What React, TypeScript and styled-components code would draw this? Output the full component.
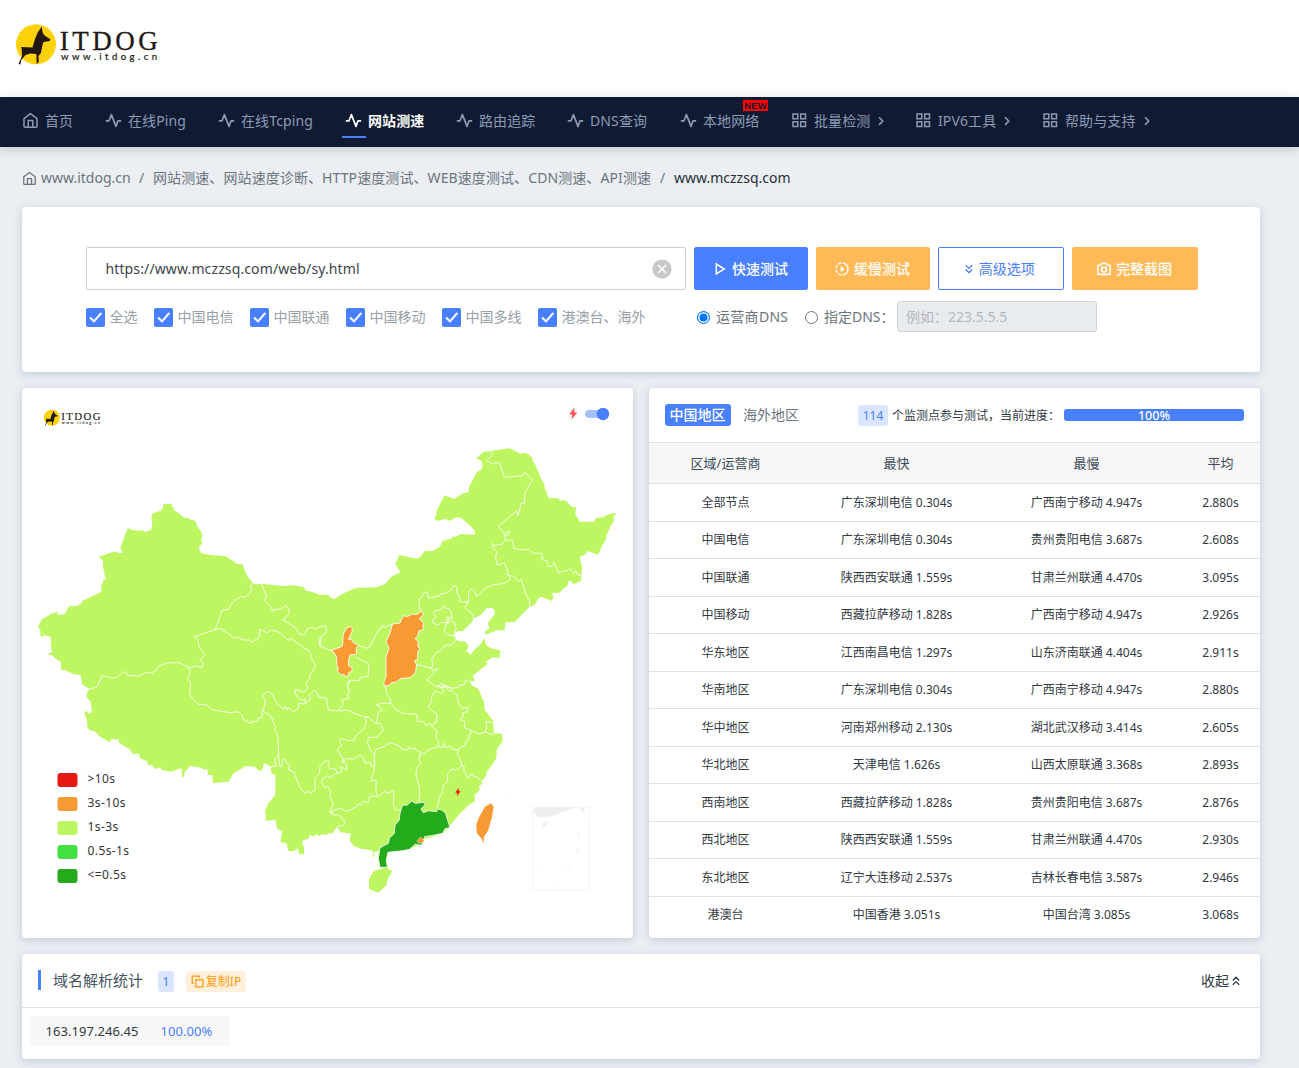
import React from 'react';
import styled, { createGlobalStyle, css } from 'styled-components';
import { MdSlowMotionVideo } from 'react-icons/md';

const blue = '#4880ff';
const orange = '#ffba57';
const lime = '#bdf661';
const mapOrange = '#f89a34';

const GlobalStyle = createGlobalStyle`
  * { box-sizing: border-box; }
  body {
    margin: 0;
    background: #ebeef3;
    color: #32393f;
    font-family: "Noto Sans", "Noto Sans CJK SC", sans-serif;
    font-size: 14px;
    line-height: 20px;
    overflow: hidden;
  }
`;

const Page = styled.div`
  width: 1299px;
  height: 1068px;
  overflow: hidden;
`;

const Header = styled.header`
  height: 97px;
  padding: 20px 0 0 14px;
  background: #fff;
`;

const Nav = styled.nav`
  display: flex;
  height: 50px;
  padding-left: 22px;
  background: #101a33;
  box-shadow: 0 2px 10px rgba(50, 60, 80, 0.22);
`;

const NavItem = styled.a<{ $w: number; $active?: boolean }>`
  display: flex;
  position: relative;
  align-items: center;
  width: ${(p) => p.$w}px;
  height: 48px;
  white-space: nowrap;
  color: ${(p) => (p.$active ? '#fff' : '#8c9ab5')};
  font-weight: ${(p) => (p.$active ? 700 : 400)};
  letter-spacing: 0.12px;
  > svg:first-child {
    width: 17px;
    height: 17px;
    margin-right: 6px;
    margin-top: -1px;
    flex: none;
  }
  ${(p) =>
    p.$active &&
    css`
      &::after {
        content: '';
        position: absolute;
        left: -3px;
        top: 39px;
        width: 24px;
        height: 2px;
        background: ${blue};
      }
    `}
`;

const NewTag = styled.span`
  position: absolute;
  left: 63px;
  top: 3px;
  width: 25px;
  height: 11px;
  background: #f00;
  color: #101a33;
  font: 700 9.5px/11px "Liberation Sans", sans-serif;
  text-align: center;
`;

const Crumbs = styled.div`
  display: flex;
  align-items: center;
  height: 60px;
  padding: 2px 0 0 22px;
  color: #6c757d;
  white-space: nowrap;
  svg {
    width: 15px;
    height: 15px;
    margin-right: 4px;
  }
`;

const CrumbText = styled.span<{ $w: number; $dark?: boolean; $spacing?: number }>`
  width: ${(p) => p.$w}px;
  color: ${(p) => (p.$dark ? '#272e37' : 'inherit')};
  letter-spacing: ${(p) => p.$spacing ?? 0}px;
`;

const Main = styled.main`
  display: flex;
  flex-direction: column;
  gap: 16px;
  width: 1238px;
  margin-left: 22px;
`;

const Card = styled.section<{ $h: number }>`
  height: ${(p) => p.$h}px;
  background: #fff;
  border-radius: 4px;
  box-shadow: 0 2px 9px rgba(80, 100, 130, 0.26);
  overflow: hidden;
`;

const FormCard = styled(Card)`
  padding: 40px 62px 0 64px;
`;

const FormRow = styled.div`
  display: flex;
  gap: 8px;
`;

const UrlField = styled.div`
  display: flex;
  align-items: center;
  justify-content: space-between;
  width: 600px;
  height: 43px;
  padding: 0 13px 0 18.5px;
  border: 1px solid #ccd0d6;
  border-radius: 2px;
  color: #3d444c;
  letter-spacing: 0.12px;
`;

const Button = styled.button<{ $w: number; $kind: 'blue' | 'orange' | 'outline' }>`
  display: flex;
  align-items: center;
  justify-content: center;
  gap: 4px;
  width: ${(p) => p.$w}px;
  height: 43px;
  padding: 0 2px 0 0;
  border: 1px solid ${(p) => (p.$kind === 'orange' ? orange : blue)};
  border-radius: 2px;
  background: ${(p) => (p.$kind === 'outline' ? '#fff' : p.$kind === 'blue' ? blue : orange)};
  color: ${(p) => (p.$kind === 'outline' ? blue : '#fff')};
  font: inherit;
  font-weight: ${(p) => (p.$kind === 'outline' ? 400 : 500)};
`;

const OptionRow = styled.div`
  display: flex;
  align-items: center;
  height: 32px;
  margin-top: 11px;
  white-space: nowrap;
`;

const Check = styled.label<{ $w: number }>`
  display: flex;
  align-items: center;
  width: ${(p) => p.$w}px;
  color: #98a0a8;
  svg {
    width: 19px;
    height: 19px;
    margin-right: 4.5px;
    flex: none;
  }
`;

const RadioLabel = styled.label<{ $w: number; $spacing: number }>`
  display: flex;
  align-items: center;
  width: ${(p) => p.$w}px;
  color: #6c757d;
  letter-spacing: ${(p) => p.$spacing}px;
`;

const Radio = styled.span<{ $on?: boolean }>`
  width: 13px;
  height: 13px;
  margin-right: 6px;
  border: 1px solid ${(p) => (p.$on ? '#0075ff' : '#767676')};
  border-radius: 50%;
  background: ${(p) => (p.$on ? '#0075ff' : '#fff')};
  box-shadow: inset 0 0 0 1.5px #fff;
`;

const DnsField = styled.div`
  width: 200px;
  height: 31px;
  margin-bottom: 2px;
  padding: 5px 8px;
  border: 1px solid #ced4da;
  border-radius: 3px;
  background: #e9ecef;
  color: #b2b8be;
`;

const Columns = styled.div`
  display: grid;
  grid-template-columns: 611px 611px;
  gap: 16px;
`;

const MapSvg = styled.svg`
  display: block;
  width: 611px;
  height: 550px;
`;

const RegionHead = styled.div`
  display: flex;
  align-items: center;
  height: 54px;
  padding: 0 16px;
  font-size: 12px;
  white-space: nowrap;
`;

const Tab = styled.span<{ $on?: boolean }>`
  width: ${(p) => (p.$on ? 66 : 127)}px;
  height: 22px;
  padding-left: ${(p) => (p.$on ? 4.5 : 12)}px;
  border-radius: 3px;
  background: ${(p) => (p.$on ? blue : 'transparent')};
  color: ${(p) => (p.$on ? '#fff' : '#6c757d')};
  font-size: 14px;
  font-weight: ${(p) => (p.$on ? 500 : 400)};
  line-height: 21px;
`;

const Badge = styled.span<{ $w: number; $warm?: boolean }>`
  display: flex;
  align-items: center;
  justify-content: center;
  gap: 2px;
  width: ${(p) => p.$w}px;
  height: 21px;
  padding-top: 1px;
  border-radius: 3px;
  background: ${(p) => (p.$warm ? '#fff0dc' : '#dae6ff')};
  color: ${(p) => (p.$warm ? '#ff9b0d' : blue)};
  font-size: 12px;
  white-space: nowrap;
`;

const ProgressLabel = styled.span`
  width: 172px;
  margin-left: 4px;
  padding-top: 1px;
`;

const Progress = styled.div`
  width: 180px;
  height: 12px;
  border-radius: 3px;
  background: ${blue};
  color: #fff;
  font-size: 12.5px;
  font-weight: 500;
  line-height: 13px;
  text-align: center;
`;

const Row = styled.div<{ $head?: boolean }>`
  display: grid;
  grid-template-columns: 153px 189px 191px 77px;
  align-items: center;
  height: ${(p) => (p.$head ? 41 : 37.5)}px;
  padding-top: ${(p) => (p.$head ? 0 : 1)}px;
  border-top: 1px solid #dee2e6;
  background: ${(p) => (p.$head ? '#f7f7f7' : '#fff')};
  color: ${(p) => (p.$head ? '#3b4a58' : '#32393f')};
  font-size: ${(p) => (p.$head ? 13 : 12)}px;
  text-align: center;
`;

const StatsHead = styled.div`
  display: flex;
  align-items: center;
  height: 54px;
  padding: 1px 20px 0 16px;
  border-bottom: 1px solid #dee2e6;
`;

const Title = styled.h2`
  display: flex;
  align-items: center;
  width: 120px;
  height: 20px;
  margin: -2px 0 0;
  padding-left: 12px;
  border-left: 3px solid ${blue};
  color: #475560;
  font-size: 15px;
  font-weight: 400;
`;

const Spacer = styled.span<{ $w?: number }>`
  ${(p) => (p.$w ? `width: ${p.$w}px;` : 'flex: 1;')}
`;

const Collapse = styled.span`
  display: flex;
  align-items: center;
  gap: 3px;
`;

const IpRow = styled.div`
  display: flex;
  align-items: center;
  width: 200px;
  height: 30px;
  margin: 8px;
  padding-left: 15.5px;
  border-radius: 3px;
  background: #f7f7f7;
  font-size: 13px;
  letter-spacing: 0.05px;
`;

const IpRate = styled.span`
  margin-left: 22px;
  color: ${blue};
`;

const iconStroke = {
  fill: 'none',
  stroke: 'currentColor',
  strokeWidth: 1.5,
  strokeLinejoin: 'round' as const,
};

const HomeIcon = () => (
  <svg viewBox="0 0 17 17" {...iconStroke}>
    <path d="M2 6.6 L8.5 1.6 L15 6.6 V14.2 Q15 15.2 14 15.2 H3 Q2 15.2 2 14.2Z M6.2 15 V8.6 H10.8 V15" />
  </svg>
);

const PulseIcon = () => (
  <svg viewBox="0 0 17 17" {...iconStroke} strokeWidth={1.7}>
    <path d="M.8 8.8 H4 L6.4 2.6 L11 14.4 L13 8.8 H16.2" />
  </svg>
);

const GridIcon = () => (
  <svg viewBox="0 0 17 17" {...iconStroke} strokeLinejoin="miter">
    <path d="M2 2H6.8V6.8H2Z M9.7 2H14.5V6.8H9.7Z M2 9.7H6.8V14.5H2Z M9.7 9.7H14.5V14.5H9.7Z" />
  </svg>
);

const ArrowSvg = styled.svg`
  width: 6px;
  height: 10px;
  margin-left: 8px;
`;

const Arrow = () => (
  <ArrowSvg viewBox="0 0 6 10" {...iconStroke}>
    <path d="M1 1.3 L4.8 5.1 L1 8.9" />
  </ArrowSvg>
);

const PlayIcon = () => (
  <svg width="16" height="16" viewBox="0 0 16 16" {...iconStroke} strokeLinejoin="miter">
    <path d="M4.3 3 L12.3 8 L4.3 13 Z" />
  </svg>
);

const CameraIcon = () => (
  <svg width="16" height="16" viewBox="0 0 16 16" {...iconStroke} strokeWidth={1.6}>
    <path d="M1.8 4.3 H4.6 L6 2.4 H10 L11.4 4.3 H14.2 V13.4 H1.8Z" />
    <circle cx="8" cy="8.6" r="2.5" />
  </svg>
);

const DoubleChevron = ({ up }: { up?: boolean }) => (
  <svg width="8" height="10" viewBox="0 0 8 10" {...iconStroke} strokeWidth={1.3}>
    <path d={up ? 'M.8 4.5 L4 1.3 L7.2 4.5 M.8 8.8 L4 5.6 L7.2 8.8' : 'M.8 1.2 L4 4.4 L7.2 1.2 M.8 5.5 L4 8.7 L7.2 5.5'} />
  </svg>
);

const CopyIcon = () => (
  <svg width="13" height="13" viewBox="0 0 13 13" {...iconStroke} strokeWidth={1.3}>
    <path d="M4.8 4.6 H12 V11.8 H4.8Z M2.8 8.2 H1.2 V1.2 H8.2 V2.8" />
  </svg>
);

/* Brand mark: yellow disc, sitting dog and two-line wordmark */
const Logo = ({ x, y, width, height }: { x?: number; y?: number; width: number; height: number }) => (
  <svg x={x} y={y} width={width} height={height} viewBox="0 0 150 50">
    <circle cx="22" cy="24.3" r="20" fill="#fdd209" />
    <path
      d="M27.7 6.5 L28.5 12 L30 15 L36.5 19.5 L35.7 21 L29.5 22 L28.5 25 L27 33 L24.5 36 L24.8 42 L22.6 44 L22.4 34 L16.5 33.5 L11.5 35 L7.3 40 L6.4 44.5 L4.5 44 L8 36 L7.6 28.5 L7 27 L18.5 27.5 L21 19 L23.5 13 Z"
      fill="#231815"
    />
    <text x="45.8" y="29.9" fontSize="27" fontFamily="Liberation Serif, serif" textLength="98" fill="#231815" stroke="#231815" strokeWidth=".3">
      ITDOG
    </text>
    <text x="47" y="40" fontSize="9.6" fontFamily="Lato, sans-serif" textLength="96" fill="#231815" stroke="#231815" strokeWidth=".2">
      www.itdog.cn
    </text>
  </svg>
);

const CheckIcon = () => (
  <svg viewBox="0 0 19 19">
    <rect width="19" height="19" rx="2" fill={blue} />
    <path d="M4 9.5 L8 13.3 L15.3 5" fill="none" stroke="#fff" strokeWidth="2" />
  </svg>
);

const ClearIcon = () => (
  <svg width="20" height="20" viewBox="0 0 20 20">
    <circle cx="10" cy="10" r="9.6" fill="#c8c8c8" />
    <path d="M6 6 L14 14 M14 6 L6 14" stroke="#fff" strokeWidth="1.6" />
  </svg>
);

const mainland =
  'M48,710 60,687 84,675 88,668 97,671 103,663 109,675 128,672 141,649 165,648 178,640 180,633 236,607 239,600 236,585 244,578 243,571 251,566 243,530 242,511 230,500 280,484 288,489 303,489 295,473 317,414 333,421 364,422 370,426 385,421 391,411 388,378 393,370 415,363 424,354 423,343 451,341 448,348 456,353 455,361 470,369 486,383 500,384 506,389 515,390 522,395 527,412 537,424 541,434 541,442 537,449 541,458 532,471 532,480 537,489 558,494 612,499 646,522 662,523 665,534 678,562 693,579 700,583 718,581 782,588 820,586 845,592 852,602 870,605 894,615 919,614 924,622 937,627 964,610 1004,593 1064,592 1091,581 1106,562 1135,547 1120,521 1132,495 1183,506 1197,499 1207,484 1234,482 1252,472 1263,452 1287,446 1291,440 1302,440 1315,432 1359,434 1359,424 1349,412 1318,384 1300,382 1286,392 1269,387 1244,393 1236,382 1243,377 1244,361 1268,316 1297,327 1319,312 1341,305 1340,293 1364,247 1380,236 1382,224 1377,211 1362,206 1385,185 1402,184 1464,175 1497,192 1506,188 1519,192 1532,205 1531,211 1544,230 1543,235 1556,260 1557,268 1566,280 1569,300 1575,303 1574,313 1581,324 1609,325 1615,332 1628,330 1651,352 1662,352 1660,372 1673,395 1716,395 1722,384 1742,382 1765,371 1784,368 1775,379 1776,395 1768,403 1761,421 1753,434 1753,447 1740,467 1728,494 1698,483 1687,495 1673,500 1680,532 1677,572 1655,583 1660,590 1647,572 1639,573 1636,589 1625,595 1613,608 1589,609 1594,620 1591,633 1557,620 1549,626 1537,646 1523,650 1478,696 1450,697 1448,721 1424,721 1391,734 1388,726 1403,715 1397,700 1418,673 1418,661 1410,654 1394,654 1379,673 1354,686 1349,697 1322,724 1308,722 1294,736 1307,753 1331,755 1340,771 1332,783 1346,794 1359,777 1376,762 1388,745 1392,765 1404,774 1435,781 1432,804 1411,802 1392,815 1397,823 1378,836 1352,858 1360,872 1342,874 1349,885 1369,897 1386,937 1388,960 1414,993 1415,1030 1439,1031 1443,1053 1424,1078 1423,1103 1415,1118 1394,1145 1391,1160 1378,1174 1381,1180 1370,1190 1374,1200 1357,1215 1359,1234 1339,1246 1309,1276 1288,1302 1280,1313 1262,1330 1234,1340 1208,1347 1200,1365 1190,1365 1162,1378 1144,1382 1098,1387 1093,1410 1096,1432 1074,1432 1069,1406 1071,1383 1056,1385 1055,1402 1052,1402 1052,1382 1033,1378 1019,1377 994,1367 983,1350 987,1331 957,1327 945,1312 934,1325 931,1331 923,1329 910,1335 900,1333 892,1338 882,1333 876,1340 864,1334 858,1348 843,1350 841,1362 847,1372 846,1392 831,1392 829,1375 815,1383 799,1383 794,1360 775,1356 781,1323 766,1317 760,1290 729,1292 732,1280 729,1262 739,1240 760,1214 760,1156 748,1150 746,1130 726,1119 720,1143 707,1140 700,1131 672,1127 633,1151 620,1175 573,1179 571,1156 558,1154 556,1137 545,1139 538,1133 505,1128 488,1146 487,1162 481,1161 478,1134 447,1145 418,1139 416,1132 401,1138 390,1126 378,1125 375,1113 354,1105 351,1091 331,1091 325,1079 291,1058 290,1049 269,1047 264,1057 234,1040 220,1025 203,1020 196,1012 195,990 186,970 194,962 200,972 210,966 206,935 194,922 194,910 203,897 180,883 176,854 155,853 128,840 117,839 117,815 102,807 93,797 76,792 92,786 88,780 86,741 66,735 62,740 55,738 55,719Z';

const westBorders = [
  'M693,579 684,590 690,600 682,613 665,623 660,618 640,630 627,643 620,658 600,661 590,690 580,718 517,741 528,748 530,768 549,795 543,803 533,810 543,820 541,832 515,828 510,834 497,830 470,818 435,819 407,830 402,842 391,848 370,848 350,858 316,856 312,847 302,846 288,860 275,864 240,858 225,892 203,897',
  'M580,718 600,716 605,724 620,730 627,738 640,745 648,742 665,750 680,750 690,757 698,750 705,750 714,735 712,717 735,728 748,721 765,724 777,731 800,752 804,744 835,765 845,775 856,778 865,790 868,805 875,813 880,828 872,845 862,855 865,864 852,880 857,895 845,908 830,900 818,900 822,915 835,930 850,928 850,942 830,940 830,955 815,965 800,953 795,960 790,948 786,958 768,945 760,930 750,910 735,904 722,918 730,930 728,948 722,962',
  'M497,830 505,845 497,865 506,880 503,912 515,930 530,943 555,945 570,958 605,965 625,968 650,965 660,975 665,990 675,992 678,998 685,996 688,1001 692,993 705,996 708,985 720,983 722,962 748,980 755,1000 762,1010 758,1020 767,1035 770,1095 758,1105 762,1130 750,1128 746,1135',
  'M770,1095 773,1128 779,1130 780,1115 787,1105 795,1120 803,1125 800,1140 815,1145 835,1195 850,1210 860,1204 865,1209 880,1200 878,1165 892,1150 894,1130',
  'M718,581 735,622 725,628 750,655 750,663 762,658 775,658 793,647 802,660 800,672 783,690 800,700 820,712 832,731 840,735 848,733 855,717 868,712 880,717 900,709',
  'M850,942 865,930 862,915 878,900 892,922 900,922',
];

const northBorders = [
  'M6,589 17,587 20,603 2,625 0,648 30,661 M2,620 -3,636 0,650',
  'M109,682 147,702 144,740 120,742 118,753 90,750 82,768 87,780',
  'M116,646 135,654 148,653 157,635 165,618 188,586 192,592 218,582',
  'M300,541 297,511 315,486 323,488 326,505 360,497 362,491 375,490 393,480 402,466 411,472 410,486 418,500 422,516 447,516 434,533 455,550 462,567',
  'M440,520 446,510 446,483 455,477 465,485 470,500 485,484 500,473 525,463 535,463 555,459 569,450 569,437 580,438 596,455 603,448 615,480 617,492 629,514 629,530',
  'M569,437 560,434 566,428 553,399 532,405 527,382 530,365 516,350 517,340 525,348 540,342 542,347 557,330',
  'M557,330 577,331 582,355 590,357 610,360 625,357 640,370 665,370 668,390 680,392 685,410 695,409 703,398 717,431 727,423 740,424 748,415 762,430 767,422 772,434 785,437',
  'M557,330 553,312 535,288 590,243 594,258 603,220 614,220 614,190 637,150 615,127 608,137 553,142 540,102 527,96 521,103 500,92 518,75 508,64 M553,312 568,303 566,314 555,318',
  'M337,570 348,562 340,548 345,543 360,540 372,527 378,536 387,535 393,545 395,560 380,563 383,578 365,577 355,585 340,580Z',
  'M395,560 397,575 405,580 405,590 410,595 400,618 385,615 373,605 378,580 388,578 386,562',
  'M408,628 395,645 375,646 362,662 348,668 335,690 338,705 335,715 290,703',
  'M335,715 337,722 355,715 320,750 345,768 360,770 375,767 395,775 415,772 420,765 432,765 437,750 445,752',
];

const southBorders = [
  'M87,62 82,75 88,95 82,108 88,115 65,120 70,133 55,150',
  'M0,112 20,115 25,150 55,153 75,150 85,152 130,170 145,170',
  'M195,77 200,100 212,120 212,130 230,150 250,160 290,163 293,185 308,183 316,195 330,191 336,200 345,185 350,188 350,160 335,152 323,140 335,125 335,110 345,93 365,100 372,92 358,78',
  'M358,82 378,82 387,93 397,92 410,105 413,115 417,135 427,145 442,142 443,155 428,158 430,168 421,180 435,185 433,203 455,212 480,222 495,216 500,204 498,185 508,186 520,190 M495,216 520,224',
  'M350,81 365,70 375,77 395,85',
  'M455,212 450,222 445,240 438,244 435,258 420,262 415,270 395,267 390,258 380,265 372,250 370,262 355,260',
  'M336,200 352,212 347,230 355,242 355,260 330,268 300,285 300,275 288,270 285,263 275,268 265,262 262,270 245,268 240,258 210,248 195,258 168,268 163,285',
  'M163,285 150,270 143,248 145,232 170,232 190,210 180,190 165,190 150,175 145,170 135,176 140,186 131,208 110,225 102,240 83,242 65,235 58,242 65,255 52,270 65,290 72,305 80,295 100,298 120,285 130,292 135,310 150,305 155,320 163,318',
  'M170,190 174,158 188,148 168,134 185,130 212,130',
  'M163,285 163,330 153,362 168,360 168,390 170,405',
  'M0,320 15,302 27,305 28,325 48,328 50,340 65,335 62,320 80,330 80,312 65,306 72,298',
  'M50,340 40,345 32,355 22,348 8,355 5,370 15,383 22,378 32,395 30,410 40,430 30,455',
  'M30,455 35,462 38,452 60,445 80,455 110,440 115,432 125,435 130,425 145,428 150,408 172,410 195,395 210,400 215,390 222,393 220,435 228,450 240,450',
  'M30,455 45,467 55,463 75,485 72,495 50,500',
  'M300,285 297,295 302,310 290,325 288,345 298,380 300,400 297,425',
  'M415,270 412,285 422,300 425,318 432,318 432,335 445,355 452,342 465,352 472,350 482,362',
  'M425,318 410,330 395,328 383,342 383,365 370,375 368,395 360,410 350,445',
];

const legend = [
  ['#e81812', '>10s'],
  [mapOrange, '3s-10s'],
  [lime, '1s-3s'],
  ['#43e043', '0.5s-1s'],
  ['#23ab1c', '<=0.5s'],
];

const Bolt = ({ x, y, s, color }: { x: number; y: number; s: number; color: string }) => (
  <path transform={`translate(${x} ${y}) scale(${s})`} d="M1 -6 L-4 1 H-1 L-2 6 L4 -1 H1 Z" fill={color} />
);

const ChinaMap = () => (
  <MapSvg viewBox="0 0 611 550">
    <Logo x={21} y={20} width={60} height={20} />
    <Bolt x={551.3} y={25.5} s={1} color="#ff4f4f" />
    <rect x="563" y="22" width="22" height="8" rx="4" fill="#a4c0ff" />
    <circle cx="581" cy="26" r="6.2" fill={blue} />
    <g transform="translate(0 2) scale(.33333)" fill="none" stroke="#fff" strokeOpacity=".85" strokeWidth="3" strokeLinejoin="round">
      <path d={mainland} fill={lime} stroke="none" />
      {westBorders.map((d) => (
        <path key={d} d={d} />
      ))}
      <g transform="translate(894 120)">
        {northBorders.map((d) => (
          <path key={d} d={d} />
        ))}
        <path
          fill={mapOrange}
          d="M80,594 92,589 97,594 96,605 86,628 94,628 100,638 116,646 109,653 109,673 90,675 86,690 86,708 96,712 96,724 86,728 83,742 68,732 65,736 53,724 54,710 50,705 50,682 40,665 32,662 67,649 70,612Z"
        />
        <path
          fill={mapOrange}
          d="M218,582 240,579 250,557 262,560 275,553 288,553 300,548 304,540 310,553 298,566 310,578 309,600 297,602 292,620 285,625 295,636 293,650 300,655 293,665 293,688 283,692 290,705 286,728 270,743 240,746 230,756 215,758 205,767 192,767 192,755 198,740 198,680 207,655 198,635 210,610 215,590Z"
        />
      </g>
      <g transform="translate(894 810)">
        {southBorders.map((d) => (
          <path key={d} d={d} />
        ))}
        <path
          fill="#23ab1c"
          d="M240,460 247,436 262,435 275,423 286,430 308,427 317,432 303,447 310,458 325,452 350,455 352,447 365,450 377,460 382,478 390,503 375,506 368,520 340,526 314,530 306,555 296,555 286,553 268,568 250,572 204,577 199,600 202,622 180,622 175,596 180,563 205,550 208,535 223,520 225,495 238,480Z"
        />
        <path fill={mapOrange} strokeWidth="1.5" d="M291,542 302,532 313,541 308,549 295,549Z" />
        <path stroke="none" fill={lime} d="M147,656 163,632 190,625 203,622 208,630 218,632 203,658 200,675 175,698 147,687Z" />
        <path stroke="none" fill={mapOrange} d="M469,492 478,470 495,440 513,430 521,440 515,475 505,510 492,530 490,552 486,538 470,518Z" />
        <rect x="638" y="442" width="170" height="248" stroke="#f4f4f4" strokeOpacity="1" />
        <g fill="#eee" stroke="none">
          <path d="M638,452 650,441 765,442 690,470 655,470Z M780,444 H795 L789,460Z M668,490 683,483 678,500 668,501Z M774,518 779,514 777,534Z M774,564 777,563 776,576 767,580Z M796,472 801,464 797,475Z M669,578 682,570 672,576Z M653,614 659,629 655,622Z M745,615 749,615 739,631Z M699,662 711,659 703,664Z M569,410 573,407 571,412Z" />
        </g>
        <g stroke="none">
          <Bolt x={414} y={396} s={2} color="#f00" />
        </g>
      </g>
    </g>
    {legend.map(([color, label], i) => (
      <g key={label}>
        <rect x="35.5" y={385 + i * 24} width="20" height="14" rx="3" fill={color} />
        <text x="65.5" y={395 + i * 24} fontSize="12" fontFamily="Noto Sans" letterSpacing=".4" fill="#333">
          {label}
        </text>
      </g>
    ))}
  </MapSvg>
);

const navItems = [
  { label: '首页', w: 83, icon: HomeIcon },
  { label: '在线Ping', w: 113, icon: PulseIcon },
  { label: '在线Tcping', w: 127, icon: PulseIcon },
  { label: '网站测速', w: 111, icon: PulseIcon, active: true },
  { label: '路由追踪', w: 111, icon: PulseIcon },
  { label: 'DNS查询', w: 113, icon: PulseIcon },
  { label: '本地网络', w: 111, icon: PulseIcon, isNew: true },
  { label: '批量检测', w: 124, icon: GridIcon, menu: true },
  { label: 'IPV6工具', w: 127, icon: GridIcon, menu: true },
  { label: '帮助与支持', w: 130, icon: GridIcon, menu: true },
];

const checks: [string, number][] = [
  ['全选', 68],
  ['中国电信', 96],
  ['中国联通', 96],
  ['中国移动', 96],
  ['中国多线', 96],
  ['港澳台、海外', 159],
];

const rows = [
  ['全部节点', '广东深圳电信 0.304s', '广西南宁移动 4.947s', '2.880s'],
  ['中国电信', '广东深圳电信 0.304s', '贵州贵阳电信 3.687s', '2.608s'],
  ['中国联通', '陕西西安联通 1.559s', '甘肃兰州联通 4.470s', '3.095s'],
  ['中国移动', '西藏拉萨移动 1.828s', '广西南宁移动 4.947s', '2.926s'],
  ['华东地区', '江西南昌电信 1.297s', '山东济南联通 4.404s', '2.911s'],
  ['华南地区', '广东深圳电信 0.304s', '广西南宁移动 4.947s', '2.880s'],
  ['华中地区', '河南郑州移动 2.130s', '湖北武汉移动 3.414s', '2.605s'],
  ['华北地区', '天津电信 1.626s', '山西太原联通 3.368s', '2.893s'],
  ['西南地区', '西藏拉萨移动 1.828s', '贵州贵阳电信 3.687s', '2.876s'],
  ['西北地区', '陕西西安联通 1.559s', '甘肃兰州联通 4.470s', '2.930s'],
  ['东北地区', '辽宁大连移动 2.537s', '吉林长春电信 3.587s', '2.946s'],
  ['港澳台', '中国香港 3.051s', '中国台湾 3.085s', '3.068s'],
];

export default function App() {
  return (
    <Page>
      <GlobalStyle />
      <Header>
        <Logo width={150} height={50} />
      </Header>
      <Nav>
        {navItems.map(({ label, w, icon: Icon, active, isNew, menu }) => (
          <NavItem key={label} $w={w} $active={active}>
            <Icon />
            <span>{label}</span>
            {menu && <Arrow />}
            {isNew && <NewTag>NEW</NewTag>}
          </NavItem>
        ))}
      </Nav>
      <Crumbs>
        <HomeIcon />
        <CrumbText $w={98}>www.itdog.cn</CrumbText>
        <CrumbText $w={14}>/</CrumbText>
        <CrumbText $w={507} $spacing={0.09}>网站测速、网站速度诊断、HTTP速度测试、WEB速度测试、CDN测速、API测速</CrumbText>
        <CrumbText $w={14}>/</CrumbText>
        <CrumbText $w={130} $dark>www.mczzsq.com</CrumbText>
      </Crumbs>
      <Main>
        <FormCard $h={165}>
          <FormRow>
            <UrlField>
              https://www.mczzsq.com/web/sy.html
              <ClearIcon />
            </UrlField>
            <Button $w={114} $kind="blue"><PlayIcon />快速测试</Button>
            <Button $w={114} $kind="orange"><MdSlowMotionVideo size={16} />缓慢测试</Button>
            <Button $w={126} $kind="outline"><DoubleChevron />&#8202;高级选项</Button>
            <Button $w={126} $kind="orange"><CameraIcon />完整截图</Button>
          </FormRow>
          <OptionRow>
            {checks.map(([label, w]) => (
              <Check key={label} $w={w}>
                <CheckIcon />
                {label}
              </Check>
            ))}
            <RadioLabel $w={108} $spacing={0.3}><Radio $on />运营商DNS</RadioLabel>
            <RadioLabel $w={92} $spacing={0}><Radio />指定DNS：</RadioLabel>
            <DnsField>例如：223.5.5.5</DnsField>
          </OptionRow>
        </FormCard>
        <Columns>
          <Card $h={550}>
            <ChinaMap />
          </Card>
          <Card $h={550}>
            <RegionHead>
              <Tab $on>中国地区</Tab>
              <Tab>海外地区</Tab>
              <Badge $w={30}>114</Badge>
              <ProgressLabel>个监测点参与测试，当前进度：</ProgressLabel>
              <Progress>100%</Progress>
            </RegionHead>
            <Row $head>
              <span>区域/运营商</span>
              <span>最快</span>
              <span>最慢</span>
              <span>平均</span>
            </Row>
            {rows.map((cells) => (
              <Row key={cells[0]}>
                {cells.map((cell, i) => (
                  <span key={i}>{cell}</span>
                ))}
              </Row>
            ))}
          </Card>
        </Columns>
        <Card $h={105}>
          <StatsHead>
            <Title>域名解析统计</Title>
            <Badge $w={16}>1</Badge>
            <Spacer $w={12} />
            <Badge $w={60} $warm><CopyIcon />复制IP</Badge>
            <Spacer />
            <Collapse>收起<DoubleChevron up /></Collapse>
          </StatsHead>
          <IpRow>
            163.197.246.45
            <IpRate>100.00%</IpRate>
          </IpRow>
        </Card>
      </Main>
    </Page>
  );
}
